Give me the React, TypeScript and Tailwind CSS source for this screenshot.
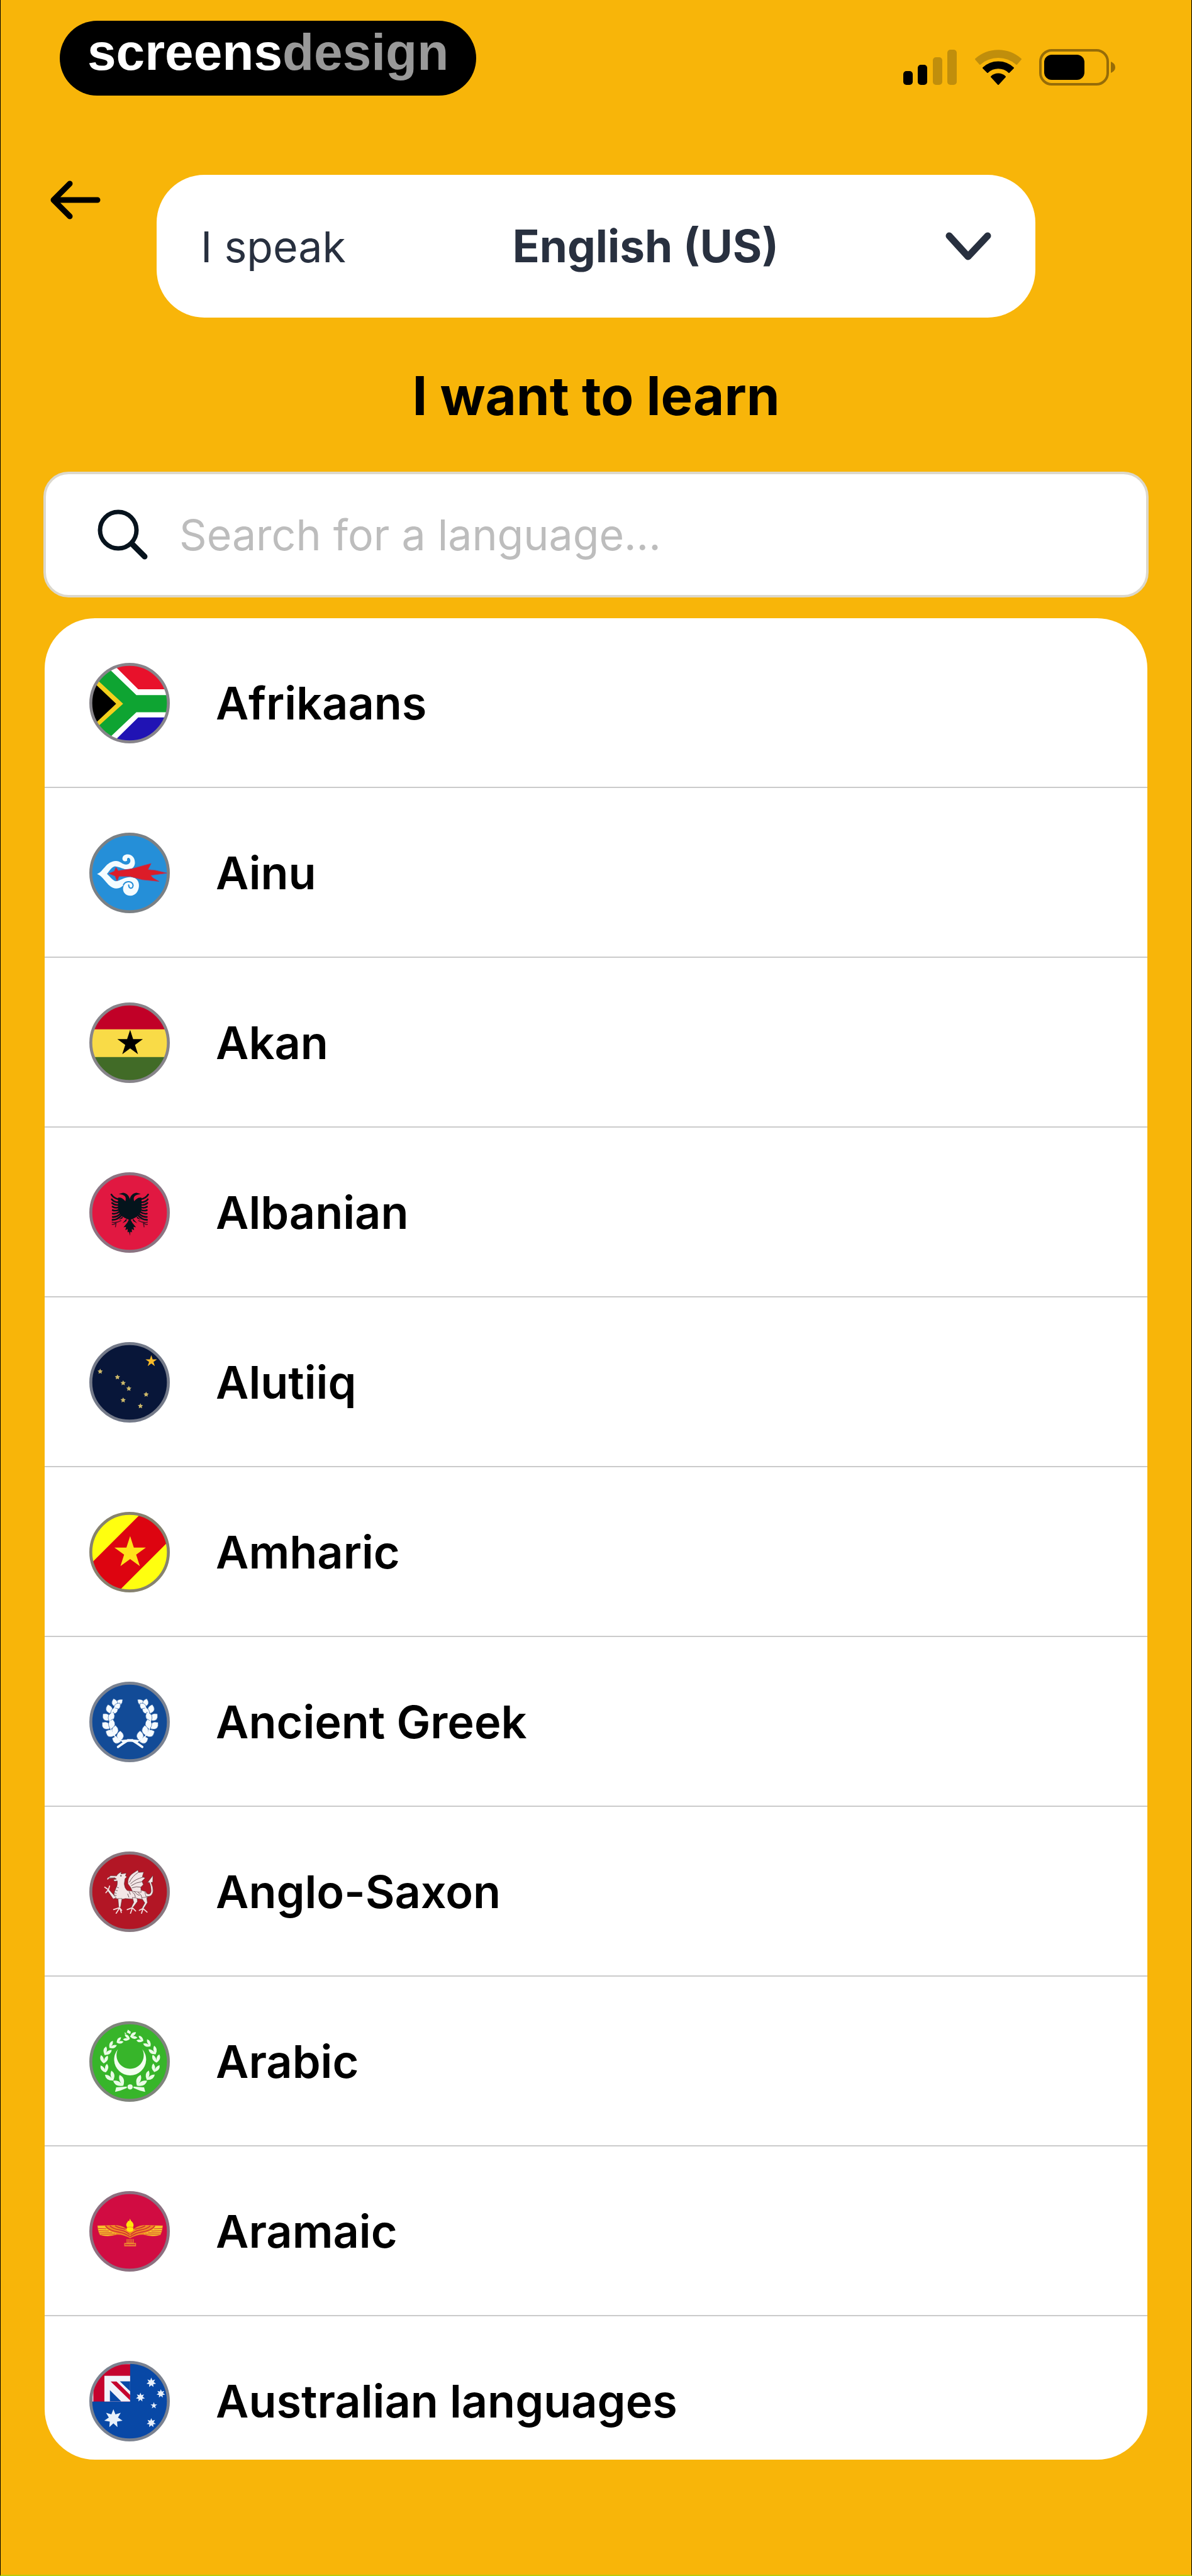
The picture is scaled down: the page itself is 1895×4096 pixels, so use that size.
import { useId, useState, type ReactNode } from "react";

/* ---------- drawing helpers ---------- */

function starPoints(cx: number, cy: number, r: number, tips = 5, inner = 0.382) {
  const pts: string[] = [];
  for (let i = 0; i < tips * 2; i++) {
    const radius = i % 2 === 0 ? r : r * inner;
    const a = (Math.PI * i) / tips - Math.PI / 2;
    pts.push(`${(cx + radius * Math.cos(a)).toFixed(1)},${(cy + radius * Math.sin(a)).toFixed(1)}`);
  }
  return pts.join(" ");
}

function Star(p: { x: number; y: number; r: number; fill: string; tips?: number; inner?: number }) {
  return <polygon points={starPoints(p.x, p.y, p.r, p.tips, p.inner)} fill={p.fill} />;
}

/* Draws its children twice, the second time mirrored about a vertical axis. */
function Mirror({ axis, children }: { axis: number; children: ReactNode }) {
  return (
    <>
      <g>{children}</g>
      <g transform={`translate(${axis * 2} 0) scale(-1 1)`}>{children}</g>
    </>
  );
}

/* Round badge; cy is the vertical centre of the artwork's own coordinates. */
function Flag({ cy, fill, ring = "#87848a", children }: { cy: number; fill: string; ring?: string; children: ReactNode }) {
  const id = useId();
  return (
    <svg viewBox={`66 ${cy - 219} 438 438`} className="size-32 shrink-0" aria-hidden="true">
      <clipPath id={id}>
        <circle cx="285" cy={cy} r="212" />
      </clipPath>
      <g clipPath={`url(#${id})`}>
        <rect x="66" y={cy - 219} width="438" height="438" fill={fill} />
        {children}
      </g>
      <circle cx="285" cy={cy} r="211" fill="none" stroke={ring} strokeWidth="16" />
    </svg>
  );
}

/* ---------- flags ---------- */

const SouthAfrica = () => (
  <Flag cy={285} fill="#e8112b">
    <rect x="60" y="288" width="450" height="230" fill="#2013b4" />
    <path d="M132,10 L332,210 H520 V363 H332 L132,560 H0 V10Z" fill="#fff" />
    <path d="M82,10 L322,241 H520 V335 H322 L82,562 H0 V10Z" fill="#0ea432" />
    <path d="M250,288 L122,170 L60,113 V463 L122,404Z" fill="#f3d01c" />
    <path d="M212,288 L60,145 V431Z" fill="#000" />
  </Flag>
);

const Ainu = () => (
  <Flag cy={308} fill="#258fd8" ring="#7b8084">
    <path
      fill="#f4fcff"
      d="M108,314 C145,300 155,246 210,243 C232,242 246,262 266,263 C285,263 294,246 287,232 C281,221 268,226 272,240 C262,250 247,244 246,231 C246,215 260,206 277,207 C303,209 316,232 314,256 C312,276 298,288 280,289 C258,292 236,276 205,272 C184,278 174,300 162,313 C180,330 195,350 210,353 C232,352 250,332 290,330 C320,332 338,350 336,380 C334,410 315,432 290,432 C262,432 246,410 250,388 C252,380 254,374 258,368 C246,380 238,392 212,393 C165,390 150,330 108,314Z"
    />
    <path d="M252,372 C262,352 292,350 302,368 C308,380 300,394 288,390 C278,386 282,378 280,374" fill="none" stroke="#258fd8" strokeWidth="7" strokeLinecap="round" />
    <path
      fill="#dc1c28"
      stroke="#a93a62"
      strokeWidth="3"
      d="M172,311 L202,299 L211,277 L223,296 L300,285 L360,268 L402,257 L385,290 L425,294 L488,309 L400,321 L412,335 L445,354 L355,345 L290,328 L228,326 L217,352 L206,325Z"
    />
  </Flag>
);

const Ghana = () => (
  <Flag cy={1230} fill="#f9db47">
    <rect x="60" y="1000" width="450" height="157" fill="#c10027" />
    <rect x="60" y="1308" width="450" height="150" fill="#416b27" />
    <Star x={288} y={1233} r={73} fill="#000" />
  </Flag>
);

const Albania = () => (
  <Flag cy={294} fill="#e11841" ring="#8b7482">
    <Mirror axis={286}>
      <g fill="#04141c">
        <path d="M287,226 C284,204 270,188 250,186 L226,193 L246,197 C262,202 268,214 262,232 C248,216 236,210 222,214 L222,262 C220,296 240,312 264,326 L287,336Z" />
        <path d="M287,322 L272,350 L252,374 L266,372 L262,390 L275,384 L274,402 L282,398 L287,420Z" />
        <path d="M250,312 L226,334 L246,326 Z M270,326 L246,352 L268,340Z" />
      </g>
      <g fill="none" stroke="#04141c" strokeWidth="9" strokeLinecap="round">
        <path d="M226,222 Q198,216 186,196" />
        <path d="M226,238 Q200,238 188,222" />
        <path d="M226,252 Q204,256 190,242" />
        <path d="M226,266 Q206,272 192,262" />
        <path d="M228,278 Q208,288 193,281" />
        <path d="M230,290 Q212,304 193,300" />
        <path d="M236,300 Q216,320 193,318" />
        <path d="M242,308 Q220,334 192,334" />
      </g>
      <g fill="none" stroke="#4a0f24" strokeWidth="5" strokeLinecap="round">
        <path d="M238,338 Q214,352 190,346 M212,350 Q200,362 190,358 M212,350 L208,372" />
      </g>
    </Mirror>
  </Flag>
);

const alaskaStars = [[125, 1157], [219, 1188], [250, 1220], [281, 1250], [375, 1282], [250, 1313], [344, 1345]];

const Alaska = () => (
  <Flag cy={1216} fill="#081639" ring="#747a89">
    <Star x={403} y={1101} r={33} fill="#f9bb2a" />
    {alaskaStars.map(([x, y]) => (
      <Star key={`${x}-${y}`} x={x} y={y} r={15} inner={0.5} fill="#cdb96a" />
    ))}
  </Flag>
);

const Amharic = () => (
  <Flag cy={279} fill="#ffff0f" ring="#86826f">
    <polygon points="416,0 717,0 0,717 0,416" fill="#dd0410" />
    <Star x={288} y={282} r={90} fill="#ffe21a" />
  </Flag>
);

/* x, y, rotation, half length, width */
const laurel = [
  [228, 1096, 50, 26, 30],
  [204, 1098, -15, 24, 32],
  [218, 1118, 40, 24, 32],
  [174, 1132, -15, 26, 36],
  [202, 1142, 60, 24, 30],
  [158, 1176, -45, 26, 38],
  [186, 1174, 25, 28, 34],
  [156, 1222, -50, 27, 40],
  [188, 1214, 10, 28, 36],
  [180, 1264, -65, 28, 40],
  [206, 1248, 5, 28, 36],
  [214, 1300, -70, 26, 40],
  [234, 1278, 0, 28, 38],
];

const Laurel = () => (
  <Flag cy={1202} fill="#124b97" ring="#7a8291">
    <Mirror axis={288}>
      <g fill="#f5fbff" stroke="#124b97" strokeWidth="2">
        {laurel.map(([x, y, a, l, w], i) => (
          <path key={i} d={`M0,${-l} Q${w},0 0,${l} Q${-w},0 0,${-l}`} transform={`translate(${x} ${y}) rotate(${a})`} />
        ))}
      </g>
      <path d="M214,1110 Q158,1180 188,1256 Q216,1302 250,1306" fill="none" stroke="#f5fbff" strokeWidth="6" strokeLinecap="round" />
      <path d="M248,1306 L300,1302 Q326,1318 354,1338" fill="none" stroke="#f5fbff" strokeWidth="13" strokeLinecap="round" />
    </Mirror>
  </Flag>
);

const WhiteDragon = () => (
  <Flag cy={265} fill="#b21625" ring="#887880">
    <g stroke="#4d3034" strokeWidth="2" strokeLinejoin="round" fill="#f3e6e6">
      <path d="M168,190 L182,178 L214,179 L222,168 L240,156 L238,168 L268,164 L262,178 L270,184 L260,194 L256,222 Q258,246 272,258 L300,262 L345,256 L372,264 Q384,276 382,296 L370,310 L344,304 L326,302 L300,304 L262,302 L236,308 L206,300 Q194,280 208,252 Q222,228 218,206 L204,208 L196,200 L214,196 L204,190 L172,194Z" />
      <path d="M276,222 Q272,190 298,168 L330,147 L334,160 L362,158 L354,184 L370,190 L352,208 L360,226 L346,240 L348,268 L300,262 L290,240Z" />
      <path d="M368,268 Q398,290 402,262 Q402,232 392,214 L382,216 L412,176 L411,214 L402,214 Q416,244 412,268 Q404,296 374,290Z" />
      <path d="M222,302 L244,302 L236,350 L226,350Z M300,296 L326,300 L328,318 L304,350 L294,350 L308,322Z M350,298 L378,294 L382,324 L362,356 L352,354 L368,326Z M212,298 L172,252 L164,258 L196,304Z" />
    </g>
    <g stroke="#f3dede" strokeWidth="6" strokeLinecap="round" fill="none">
      <path d="M170,254 L150,240 M170,254 L176,234 M168,256 L156,270 M170,190 L166,196" />
      <path d="M230,352 L198,362 M230,354 L212,382 M232,354 L240,378 M230,352 L242,366" />
      <path d="M300,352 L272,362 M300,354 L290,382 M300,352 L318,370" />
      <path d="M358,356 L338,366 M358,358 L350,382 M358,356 L380,376" />
    </g>
    <g stroke="#5b4448" strokeWidth="3" fill="none">
      <path d="M284,214 Q300,180 332,160 M290,222 Q316,196 358,186 M294,232 Q320,214 352,210 M298,244 Q322,234 346,240" />
      <path d="M282,262 L290,280 M300,268 Q316,276 316,296 M330,268 Q350,280 352,296 M274,276 L282,296 M310,262 Q326,284 340,284 M172,190 L206,190" />
      <path d="M208,256 L220,260 M202,270 L214,274 M202,284 L214,286 M216,240 L226,244" />
    </g>
    <circle cx="238" cy="178" r="4" fill="#5b4448" />
  </Flag>
);

/* x, y, rotation, scale */
const wreath = [
  [270, 1060, -70, 0.8],
  [230, 1076, 62, 0.8],
  [190, 1100, 48, 0.9],
  [161, 1134, 32, 1],
  [146, 1176, 4, 1],
  [150, 1226, -14, 1],
  [182, 1270, -32, 1.15],
  [232, 1298, -42, 1.3],
  [306, 1048, 76, 0.85],
  [344, 1068, -64, 0.8],
  [384, 1092, -48, 0.9],
  [415, 1130, -32, 1],
  [430, 1172, -4, 1],
  [425, 1224, 16, 1],
  [392, 1268, 34, 1.1],
  [344, 1298, 42, 1.3],
];

const ArabLeague = () => (
  <Flag cy={1188} fill="#37b52a" ring="#7f847c">
    <path d="M222,1120 A87,87 0 1 0 354,1120 A74,74 0 1 1 222,1120Z" fill="#f3fff0" />
    <g fill="#eafce6">
      {wreath.map(([x, y, a, s], i) => (
        <path key={i} d="M0,22 Q-30,4 -18,-22 Q-1,-12 0,8 Q1,-12 18,-22 Q30,4 0,22" transform={`translate(${x} ${y}) rotate(${a}) scale(${s})`} />
      ))}
      <path d="M276,1014 L292,1026 L288,1038 L270,1030Z M256,1030 L268,1034 L262,1040Z" />
      <circle cx="288" cy="1326" r="14" />
      <Mirror axis={288}>
        <path d="M270,1324 L212,1328 L206,1353 L234,1346 L270,1332Z" />
      </Mirror>
    </g>
  </Flag>
);

const Aramean = () => (
  <Flag cy={280} fill="#d10c42" ring="#8c7080">
    <Mirror axis={288}>
      <path d="M289,284 L262,262 Q240,246 200,246 L110,248 Q112,280 124,300 Q168,314 216,298 Q250,296 289,318Z" fill="#f08a24" />
      <path d="M112,250 L150,250 Q160,276 214,292 Q166,310 126,300 Q116,282 112,250Z" fill="#f8c62c" />
      <g fill="none" stroke="#cf2a35" strokeWidth="5">
        <path d="M154,250 Q170,276 226,284 Q262,290 288,310" />
        <path d="M178,250 Q196,268 240,274 Q266,280 286,298" />
        <path d="M206,250 Q226,262 262,268" />
        <path d="M112,264 L158,266 M116,276 L172,278 M120,288 L190,287 M126,297 L206,294" strokeWidth="3" />
      </g>
      <path d="M269,322 H289 V346 H269Z" fill="#e9842a" />
      <path d="M256,343 H289 V361 H256Z" fill="#ee8a30" />
      <path d="M276,322 V342 M284,322 V342 M260,352 H288" stroke="#d10c42" strokeWidth="4" />
    </Mirror>
    <path d="M287,211 Q290,224 302,232 Q312,248 302,258 Q310,268 302,278 Q288,288 273,278 Q264,268 273,258 Q262,248 270,234 Q276,228 277,222 Q282,226 284,222Z" fill="#ffe70a" />
    <path d="M270,260 Q288,252 306,260" fill="none" stroke="#f49a20" strokeWidth="4" />
  </Flag>
);

const Australia = () => (
  <Flag cy={1204} fill="#0848a6" ring="#7b8290">
    <rect x="60" y="980" width="228" height="226" fill="#c5022e" />
    <rect x="82" y="980" width="6" height="226" fill="#eadfea" />
    <rect x="60" y="996" width="228" height="7" fill="#f0a5bb" />
    <rect x="148" y="1066" width="140" height="140" fill="#f1f2fa" />
    <path d="M232,1096 H288 V1150Z M178,1144 V1206 H240Z" fill="#0848a6" />
    <path d="M182,1097 H214 L288,1170 V1200Z" fill="#c5022e" />
    <Star x={197} y={1299} r={51} tips={7} inner={0.5} fill="#e9f1fb" />
    <Star x={403} y={1103} r={27} tips={7} inner={0.5} fill="#e9f1fb" />
    <Star x={455} y={1163} r={24} tips={7} inner={0.5} fill="#e9f1fb" />
    <Star x={344} y={1183} r={25} tips={7} inner={0.5} fill="#e9f1fb" />
    <Star x={417} y={1228} r={19} fill="#e9f1fb" />
    <Star x={403} y={1322} r={26} tips={7} inner={0.5} fill="#e9f1fb" />
  </Flag>
);

const languages = [
  { name: "Afrikaans", Icon: SouthAfrica },
  { name: "Ainu", Icon: Ainu },
  { name: "Akan", Icon: Ghana },
  { name: "Albanian", Icon: Albania },
  { name: "Alutiiq", Icon: Alaska },
  { name: "Amharic", Icon: Amharic },
  { name: "Ancient Greek", Icon: Laurel },
  { name: "Anglo-Saxon", Icon: WhiteDragon },
  { name: "Arabic", Icon: ArabLeague },
  { name: "Aramaic", Icon: Aramean },
  { name: "Australian languages", Icon: Australia },
];

/* ---------- status bar ---------- */

function StatusIcons() {
  return (
    <div className="flex items-center pb-4">
      <svg viewBox="0 0 86 58" className="mr-7 h-[58px] w-[86px]" role="img" aria-label="Signal: two of four bars">
        <rect x="0" y="35" width="15" height="22" rx="5" fill="#000" />
        <rect x="23" y="25" width="15" height="32" rx="5" fill="#000" />
        <rect x="47" y="13" width="15" height="44" rx="5" fill="#c08e0c" />
        <rect x="70" y="1" width="15" height="56" rx="5" fill="#c08e0c" />
      </svg>
      <svg viewBox="0 0 74 58" className="mr-7 h-[58px] w-[74px]" role="img" aria-label="Wi-Fi" strokeLinejoin="round" strokeWidth="2">
        <path d="M1,16 A54,54 0 0 1 73,16 L66,24 A44,44 0 0 0 8,24Z" fill="#c08e0c" stroke="#c08e0c" />
        <path d="M13,30 A35,35 0 0 1 61,30 L54,37 A25,25 0 0 0 20,37Z" fill="#000" stroke="#000" />
        <path d="M26,44 A16,16 0 0 1 48,44 L37,56Z" fill="#000" stroke="#000" />
      </svg>
      <svg viewBox="0 0 121 58" className="h-[58px] w-[121px]" role="img" aria-label="Battery 60 percent">
        <rect x="2" y="2" width="107" height="54" rx="18" fill="none" stroke="#966c08" strokeWidth="4" />
        <rect x="8" y="9" width="64" height="40" rx="12" fill="#000" />
        <path d="M114,20 Q121,23 121,29 Q121,35 114,38Z" fill="#966c08" />
      </svg>
    </div>
  );
}

/* ---------- page ---------- */

export default function App() {
  const [query, setQuery] = useState("");
  const shown = languages.filter((l) => l.name.toLowerCase().includes(query.toLowerCase()));

  return (
    <main className="flex h-screen flex-col border-x border-b-2 border-x-black border-b-[#bccb0a] bg-[#f8b509] pb-[183px] font-['Inter',sans-serif] text-black">
      <header className="flex items-end justify-between pt-[33px] pr-[121px] pl-[94px]">
        <div className="flex h-[119px] items-start rounded-full bg-black px-11 font-['Liberation_Sans',sans-serif] text-[82px] leading-[100px] font-bold">
          <span className="text-white">screens</span>
          <span className="text-[#999999]">design</span>
        </div>
        <StatusIcons />
      </header>

      <div className="mt-[126px] grid grid-cols-[248px_1fr_248px] items-start">
        <button type="button" aria-label="Back" className="ml-[79px] pt-[9px]">
          <svg viewBox="0 0 80 62" className="h-[62px] w-20" fill="none" stroke="#000" strokeWidth="9" strokeLinecap="round" strokeLinejoin="round">
            <path d="M31,5 L5,31 L31,57 M6,31 H75" />
          </svg>
        </button>
        <div className="flex h-[227px] items-center rounded-[76px] bg-white pr-[70px] pl-[70px] text-[68px] text-[#28303f]">
          <label htmlFor="native">I speak</label>
          <select id="native" className="min-w-0 flex-1 appearance-none bg-transparent text-center text-[71px] font-bold outline-none">
            <option>English (US)</option>
          </select>
          <svg viewBox="0 0 73 46" className="h-[46px] w-[73px]" fill="none" stroke="#28303f" strokeWidth="11" strokeLinecap="round" strokeLinejoin="round" aria-hidden="true">
            <path d="M6,6 L36,39 L67,6" />
          </svg>
        </div>
      </div>

      <h1 className="mt-[73px] mb-[68px] text-center text-[85px] leading-[104px] font-bold">I want to learn</h1>

      <label className="mx-[68px] flex h-[200px] items-center gap-[50px] rounded-[40px] border-4 border-[#dcd8cc] bg-white px-[82px]">
        <svg viewBox="0 0 80 80" className="size-20 shrink-0" fill="none" stroke="#07131d" strokeLinecap="round" aria-hidden="true">
          <circle cx="33" cy="33" r="29" strokeWidth="7" />
          <path d="M55,55 L75,75" strokeWidth="9" />
        </svg>
        <input
          type="text"
          aria-label="Search for a language"
          placeholder="Search for a language..."
          value={query}
          onChange={(e) => setQuery(e.target.value)}
          className="min-w-0 flex-1 bg-transparent text-[68px] outline-none placeholder:text-[#bdbdbd]"
        />
      </label>

      <ul className="mx-[70px] mt-[33px] min-h-0 flex-1 overflow-y-auto rounded-[80px] bg-white [scrollbar-width:none]">
        {shown.map(({ name, Icon }) => (
          <li key={name} className="border-b-2 border-[#cbcbcb]">
            <button type="button" className="flex h-[268px] w-full items-center gap-[73px] px-[71px] pt-0.5 text-left text-[72px] font-semibold">
              <Icon />
              {name}
            </button>
          </li>
        ))}
      </ul>
    </main>
  );
}
